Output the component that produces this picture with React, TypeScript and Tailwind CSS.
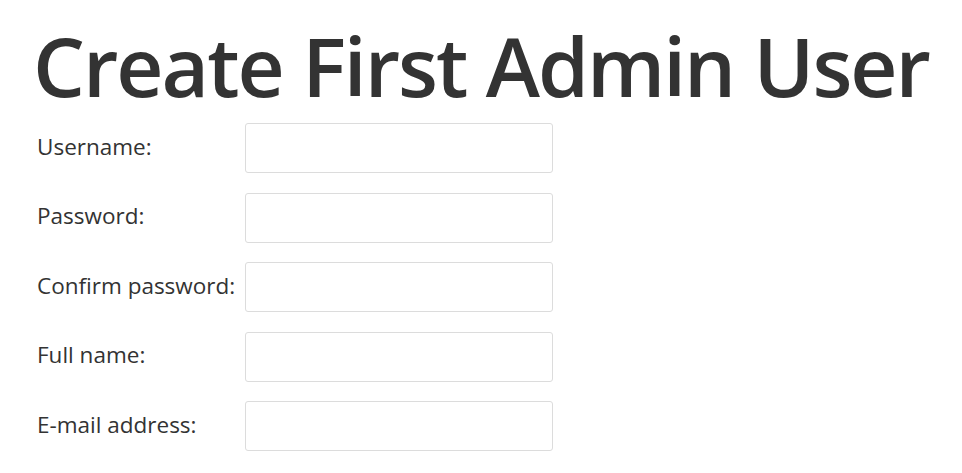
import React from 'react';

const fields = [
  { label: 'Username:', type: 'text' },
  { label: 'Password:', type: 'password' },
  { label: 'Confirm password:', type: 'password' },
  { label: 'Full name:', type: 'text' },
  { label: 'E-mail address:', type: 'email' },
];

export default function App() {
  return (
    <div className="min-h-screen bg-white text-[#333] font-['Open_Sans',sans-serif]">
      <div className="pl-[35px] pt-[22px]">
        <h1 className="-ml-[2px] text-[82px] leading-[86px] font-semibold tracking-[-2px] whitespace-nowrap">
          Create First Admin User
        </h1>
        <div className="grid w-fit grid-cols-[auto_308px] gap-y-[19.5px] items-center pl-[2px] mt-[15px]">
          {fields.map((f) => (
            <React.Fragment key={f.label}>
              <label className="text-[22.5px] pr-[10px] pb-[3px] whitespace-nowrap">{f.label}</label>
              <input
                type={f.type}
                className="h-[50px] border border-[#dcdcdc] rounded-[3px] bg-white px-3 outline-none"
              />
            </React.Fragment>
          ))}
        </div>
      </div>
    </div>
  );
}
